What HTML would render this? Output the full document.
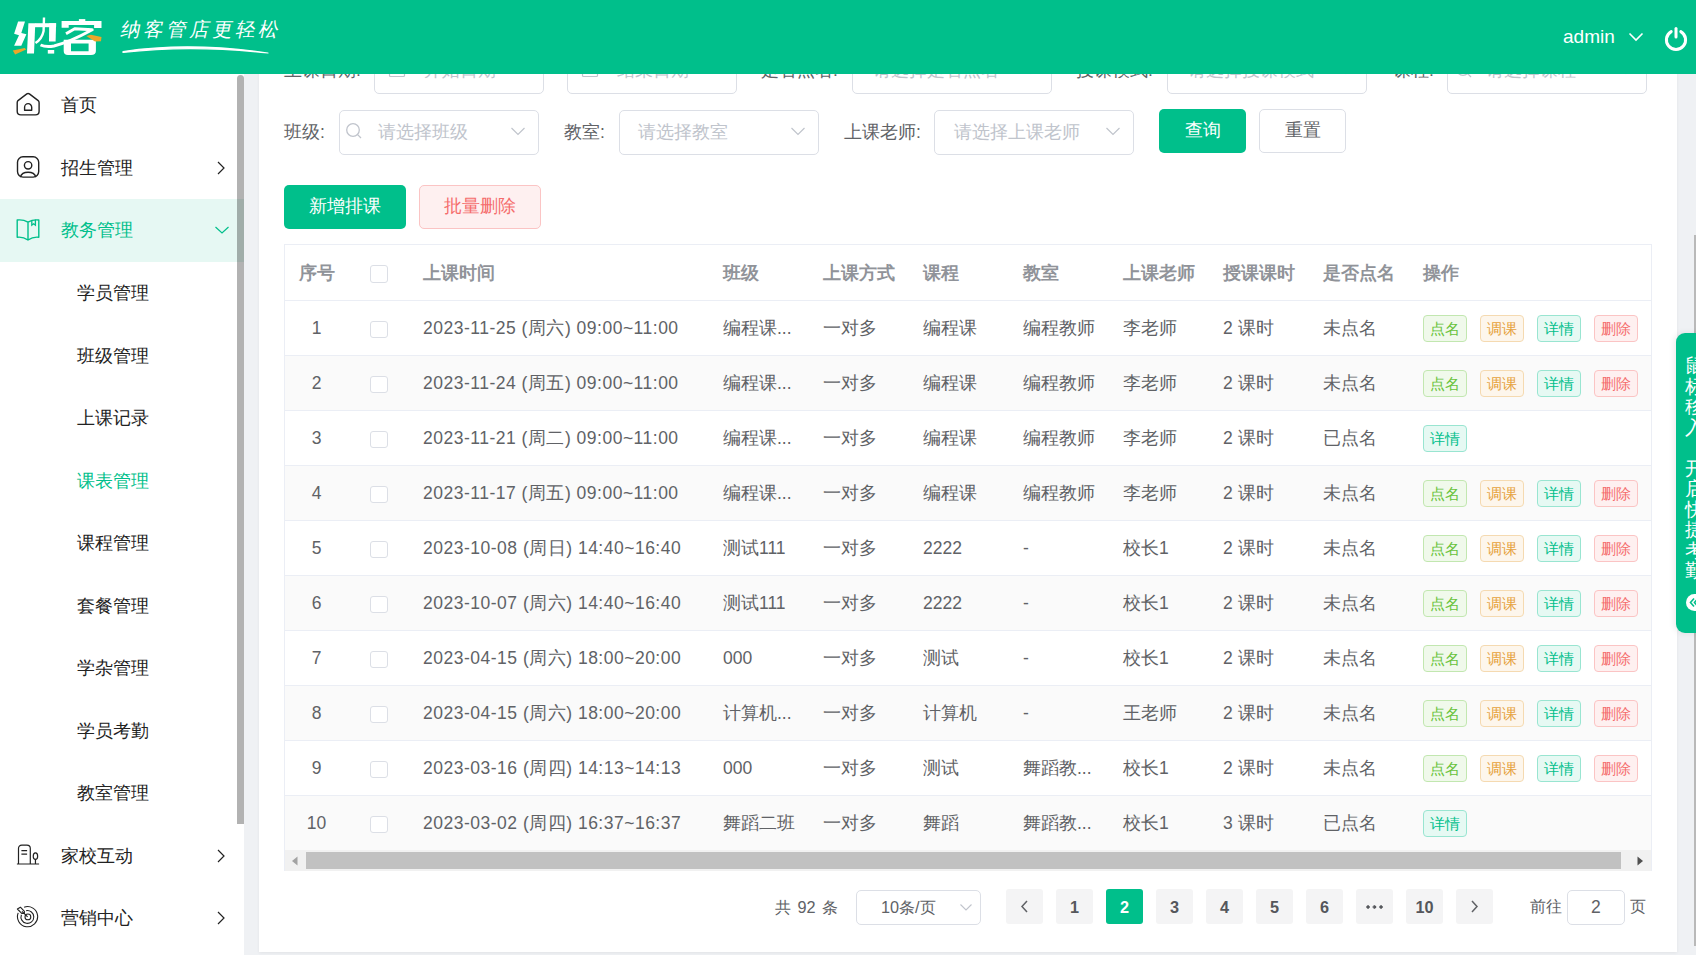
<!DOCTYPE html>
<html><head><meta charset="utf-8">
<style>
*{box-sizing:border-box;margin:0;padding:0}
html,body{width:1696px;height:955px;overflow:hidden}
body{position:relative;background:#eff1f4;font-family:"Liberation Sans",sans-serif;font-size:17.5px;color:#606266}
.abs{position:absolute}
svg{display:block}
#hdr{left:0;top:0;width:1696px;height:74px;background:#00bf8b;z-index:10}
#side{left:0;top:74px;width:244px;height:881px;background:#fff}
#card{left:259px;top:0;width:1418px;height:952px;background:#fff;box-shadow:0 1px 3px rgba(0,0,0,0.06)}
.mi{position:absolute;left:0;width:244px;height:62.5px;color:#222;font-size:17.5px}
.mi .t{position:absolute;left:61px;top:50%;transform:translateY(-50%);line-height:20px;white-space:nowrap}
.mi.sub .t{left:77px}
.mi .ic{position:absolute;left:16px;top:50%;transform:translateY(-50%)}
.mi .ar{position:absolute;left:214px;top:50%;transform:translateY(-50%)}
.lbl{position:absolute;line-height:20px;color:#606266;white-space:nowrap}
.inp{position:absolute;height:44.5px;border:1px solid #dcdfe6;border-radius:5px;background:#fff}
.ph{position:absolute;top:50%;transform:translateY(-50%);line-height:20px;color:#c0c4cc;white-space:nowrap}
.btn{position:absolute;border-radius:5px;text-align:center;white-space:nowrap}
.cell{position:absolute;white-space:nowrap;color:#606266;line-height:20px}
.th{font-weight:bold;color:#909399}
.dt{letter-spacing:0.5px}
.cb{position:absolute;width:17.5px;height:17.5px;border:1px solid #dcdfe6;border-radius:3px;background:#fff}
.tag{position:absolute;width:44px;height:27px;line-height:25px;border:1px solid;border-radius:4px;font-size:15px;text-align:center}
.tg-g{color:#67c23a;background:#f0f9eb;border-color:#c2e7b0}
.tg-o{color:#e6a23c;background:#fdf6ec;border-color:#f5dab1}
.tg-p{color:#00bf8b;background:#e6f9f3;border-color:#99e5d1}
.tg-r{color:#f56c6c;background:#fef0f0;border-color:#fbc4c4}
.pg{position:absolute;top:889px;width:37px;height:35px;line-height:37px;background:#f4f4f5;border-radius:3px;text-align:center;font-weight:bold;color:#55575c;font-size:16.25px}
.pg.act{background:#00bf8b;color:#fff}
</style></head><body>
<div id="hdr" class="abs">
 <svg class="abs" style="left:0;top:0" width="110" height="74" viewBox="0 0 110 74">
<g fill="#fff">
<path d="M18.1 21.6 L25 21.6 L21.3 32.9 L26.4 34.3 L21.3 45.8 L14.1 45.8 L19 35.2 L14.1 33.8 Z"/>
<path d="M28.4 23.2 L35.3 23.2 L34 53.6 L27 53.6 Z"/>
<path d="M35 23.2 L56.1 23.2 L56.1 27.2 L35 27.2 Z"/>
<path d="M49.2 23.2 L56.1 23.2 L55.6 41.5 L49 41.5 Z"/>
<rect x="47.8" y="50" width="6.4" height="3.6"/>
<rect x="78.9" y="19.1" width="6.4" height="3"/>
<path d="M61.6 21.1 H101.5 V28 H94.1 V25.1 H68.7 V27.8 H61.6 Z"/>
<path d="M63.7 39.8 H95.9 V51 Q95.9 55 91 55 H68 Q63.7 55 63.7 51 Z M71 43.5 V51.3 H88.6 V43.5 Z" fill-rule="evenodd"/>
</g>
<path d="M44 17.5 L43.6 31 Q42 39 35.5 43" stroke="#fff" stroke-width="2.4" fill="none"/>
<path d="M66 33.8 L74.7 28.8 L92.2 29.8 Q70 42 54 46 Q46 47.5 40.5 45" stroke="#fff" stroke-width="3" fill="none" stroke-linejoin="round"/>
<path d="M12.8 50.4 L24.7 48.1 L26.1 49.5 L15.1 54.6 Z" fill="#eba62a"/>
<path d="M86.3 36.1 L90.9 34.7 L101.5 37 L101 41.2 L95 41.6 Z" fill="#eba62a"/>
</svg>
<div class="abs" style="left:121px;top:15px;font-size:19.5px;color:#fff;line-height:30px;letter-spacing:3px;transform:skewX(-12deg);font-family:'Liberation Serif',serif">纳客管店更轻松</div>
 <svg class="abs" style="left:120px;top:40px" width="160" height="16" viewBox="0 0 160 16"><path d="M3 11.5 Q 70 1.5 148 13 Q 70 4.5 3 12.5 Z" stroke="#fff" stroke-width="1.2" fill="#fff" stroke-linejoin="round"/></svg>
 <div class="abs" style="left:1563px;top:25px;font-size:19px;color:#fff;line-height:24px">admin</div>
 <svg class="abs" style="left:1628px;top:32px" width="16" height="10" viewBox="0 0 16 10"><path d="M1.5 1.5 L8 8 L14.5 1.5" stroke="#fff" stroke-width="1.6" fill="none"/></svg>
 <svg class="abs" style="left:1663px;top:26px" width="26" height="26" viewBox="0 0 26 26"><path d="M8.2 5.6 A 9.6 9.6 0 1 0 17.8 5.6" stroke="#fff" stroke-width="3" fill="none" stroke-linecap="round"/><path d="M13 2.5 V 11" stroke="#fff" stroke-width="3" stroke-linecap="round"/></svg>
</div>
<div id="side" class="abs">
<div class="mi" style="top:-0.25px"><div class="ic"><svg width="26" height="26" viewBox="0 0 26 26"><path d="M2 8.6 L10.8 1.9 Q12.1 1 13.4 1.9 L22.2 8.6 Q23.1 9.4 23.1 10.8 V19.2 Q23.1 22.9 19.4 22.9 H4.9 Q1.2 22.9 1.2 19.2 V10.8 Q1.2 9.4 2 8.6 Z" stroke="#222" stroke-width="1.4" fill="none"/><path d="M8.6 18.3 V15.2 A3.55 3.55 0 0 1 15.7 15.2 V18.3 Z" stroke="#222" stroke-width="1.4" fill="none" stroke-linejoin="round"/></svg></div><div class="t">首页</div></div>
<div class="mi" style="top:62.75px"><div class="ic"><svg width="26" height="26" viewBox="0 0 26 26"><rect x="1.5" y="1.8" width="21.2" height="20.3" rx="5.5" stroke="#222" stroke-width="1.4" fill="none"/><circle cx="12.1" cy="10.3" r="3.7" stroke="#222" stroke-width="1.4" fill="none"/><path d="M4.3 22.1 A 8 6.2 0 0 1 19.9 22.1" stroke="#222" stroke-width="1.4" fill="none"/></svg></div><div class="t">招生管理</div><div class="ar"><svg width="14" height="16" viewBox="0 0 14 16"><path d="M4 2 L10 8 L4 14" stroke="#222" stroke-width="1.2" fill="none"/></svg></div></div>
<div class="mi" style="top:125px;background:#e6f8f3;color:#00bf8b"><div class="ic"><svg width="26" height="26" viewBox="0 0 26 26"><path d="M12 5.2 Q 7 2.2 1.2 3 V20.2 Q 7 19.5 12 23 Q 17 19.5 22.8 20.2 V3 Q 17 2.2 12 5.2 Z M12 5.2 V23" stroke="#00bf8b" stroke-width="1.4" fill="none" stroke-linejoin="round"/><path d="M15.8 3.2 V8.2 L17.6 6.8 L19.4 8.2 V2.6" stroke="#00bf8b" stroke-width="1.3" fill="none"/></svg></div><div class="t">教务管理</div><div class="ar"><svg width="16" height="14" viewBox="0 0 16 14"><path d="M1.5 4 L8 10 L14.5 4" stroke="#00bf8b" stroke-width="1.2" fill="none"/></svg></div></div>
<div class="mi sub" style="top:187.75px"><div class="t">学员管理</div></div>
<div class="mi sub" style="top:250.25px"><div class="t">班级管理</div></div>
<div class="mi sub" style="top:312.75px"><div class="t">上课记录</div></div>
<div class="mi sub" style="top:375.25px;color:#00bf8b"><div class="t">课表管理</div></div>
<div class="mi sub" style="top:437.75px"><div class="t">课程管理</div></div>
<div class="mi sub" style="top:500.25px"><div class="t">套餐管理</div></div>
<div class="mi sub" style="top:562.75px"><div class="t">学杂管理</div></div>
<div class="mi sub" style="top:625.25px"><div class="t">学员考勤</div></div>
<div class="mi sub" style="top:687.75px"><div class="t">教室管理</div></div>
<div class="mi" style="top:750.25px"><div class="ic"><svg width="26" height="26" viewBox="0 0 26 26"><path d="M2.5 21 V5.6 Q2.5 2.2 5.9 2.2 H10.9 Q14.3 2.2 14.3 5.6 V21" stroke="#222" stroke-width="1.2" fill="none"/><path d="M5.4 7.7 H11.1 M5.4 11.1 H11.1" stroke="#222" stroke-width="1.2"/><ellipse cx="19.45" cy="13.15" rx="2.2" ry="3.2" stroke="#222" stroke-width="1.2" fill="none"/><path d="M19.45 16.4 V21 M0.9 21 H23.1" stroke="#222" stroke-width="1.2"/></svg></div><div class="t">家校互动</div><div class="ar"><svg width="14" height="16" viewBox="0 0 14 16"><path d="M4 2 L10 8 L4 14" stroke="#222" stroke-width="1.2" fill="none"/></svg></div></div>
<div class="mi" style="top:812.75px"><div class="ic"><svg width="26" height="26" viewBox="0 0 26 26"><path d="M2.2 7.9 A10.1 10.1 0 1 0 8.1 2.2" stroke="#222" stroke-width="1.1" fill="none"/><path d="M5.4 9.7 A6.4 6.4 0 1 0 10.1 5.7" stroke="#222" stroke-width="1.1" fill="none"/><circle cx="11.9" cy="11.9" r="2.9" stroke="#222" stroke-width="1.1" fill="none"/><path d="M6 6.3 L11.6 11.8" stroke="#222" stroke-width="1.1"/><path d="M1.4 4 L4.4 2.2 L8.4 6.4 L8.4 8.4 L5.7 8.4 Z" stroke="#222" stroke-width="1.1" fill="none" stroke-linejoin="round"/></svg></div><div class="t">营销中心</div><div class="ar"><svg width="14" height="16" viewBox="0 0 14 16"><path d="M4 2 L10 8 L4 14" stroke="#222" stroke-width="1.2" fill="none"/></svg></div></div>
<div class="abs" style="left:237px;top:1px;width:7px;height:749px;background:rgba(0,0,0,0.3);border-radius:3.5px 3.5px 0 0"></div>
</div>
<div id="card" class="abs"></div>
<div class="lbl" style="left:284px;top:60px">上课日期:</div>
<div class="inp" style="left:374px;top:49px;width:170px"><div class="abs" style="left:13px;top:11px"><svg width="18" height="18" viewBox="0 0 18 18"><rect x="1.5" y="2.5" width="15" height="13" rx="1" stroke="#c0c4cc" stroke-width="1.2" fill="none"/><path d="M1.5 6.5 H16.5 M5 1 V4 M13 1 V4" stroke="#c0c4cc" stroke-width="1.2"/></svg></div><div class="ph" style="left:49px;margin-top:-1.5px">开始日期</div></div>
<div class="inp" style="left:567px;top:49px;width:170px"><div class="abs" style="left:13px;top:11px"><svg width="18" height="18" viewBox="0 0 18 18"><rect x="1.5" y="2.5" width="15" height="13" rx="1" stroke="#c0c4cc" stroke-width="1.2" fill="none"/><path d="M1.5 6.5 H16.5 M5 1 V4 M13 1 V4" stroke="#c0c4cc" stroke-width="1.2"/></svg></div><div class="ph" style="left:49px;margin-top:-1.5px">结束日期</div></div>
<div class="lbl" style="left:761px;top:60px">是否点名:</div>
<div class="inp" style="left:852px;top:49px;width:200px"><div class="ph" style="left:20px;margin-top:-1.5px">请选择是否点名</div><div class="abs" style="left:170px;top:15px"><svg width="16" height="10" viewBox="0 0 16 10"><path d="M1.5 2 L8 8.5 L14.5 2" stroke="#c0c4cc" stroke-width="1.2" fill="none"/></svg></div></div>
<div class="lbl" style="left:1076px;top:60px">授课模式:</div>
<div class="inp" style="left:1167px;top:49px;width:200px"><div class="ph" style="left:20px;margin-top:-1.5px">请选择授课模式</div><div class="abs" style="left:170px;top:15px"><svg width="16" height="10" viewBox="0 0 16 10"><path d="M1.5 2 L8 8.5 L14.5 2" stroke="#c0c4cc" stroke-width="1.2" fill="none"/></svg></div></div>
<div class="lbl" style="left:1393px;top:60px">课程:</div>
<div class="inp" style="left:1447px;top:49px;width:200px"><div class="abs" style="left:7px;top:11px"><svg width="18" height="18" viewBox="0 0 18 18"><circle cx="8" cy="8" r="6.3" stroke="#c0c4cc" stroke-width="1.3" fill="none"/><path d="M12.6 12.6 L16 16" stroke="#c0c4cc" stroke-width="1.3"/></svg></div><div class="ph" style="left:38px;margin-top:-1.5px">请选择课程</div><div class="abs" style="left:170px;top:15px"><svg width="16" height="10" viewBox="0 0 16 10"><path d="M1.5 2 L8 8.5 L14.5 2" stroke="#c0c4cc" stroke-width="1.2" fill="none"/></svg></div></div>
<div class="lbl" style="left:284px;top:122px">班级:</div>
<div class="inp" style="left:339px;top:110.2px;width:200px"><div class="abs" style="left:5px;top:11px"><svg width="18" height="18" viewBox="0 0 18 18"><circle cx="8" cy="8" r="6.3" stroke="#c0c4cc" stroke-width="1.3" fill="none"/><path d="M12.6 12.6 L16 16" stroke="#c0c4cc" stroke-width="1.3"/></svg></div><div class="ph" style="left:38px;margin-top:0px">请选择班级</div><div class="abs" style="left:170px;top:15px"><svg width="16" height="10" viewBox="0 0 16 10"><path d="M1.5 2 L8 8.5 L14.5 2" stroke="#c0c4cc" stroke-width="1.2" fill="none"/></svg></div></div>
<div class="lbl" style="left:564px;top:122px">教室:</div>
<div class="inp" style="left:619px;top:110.2px;width:200px"><div class="ph" style="left:18px;margin-top:0px">请选择教室</div><div class="abs" style="left:170px;top:15px"><svg width="16" height="10" viewBox="0 0 16 10"><path d="M1.5 2 L8 8.5 L14.5 2" stroke="#c0c4cc" stroke-width="1.2" fill="none"/></svg></div></div>
<div class="lbl" style="left:844px;top:122px">上课老师:</div>
<div class="inp" style="left:934px;top:110.2px;width:200px"><div class="ph" style="left:19px;margin-top:0px">请选择上课老师</div><div class="abs" style="left:170px;top:15px"><svg width="16" height="10" viewBox="0 0 16 10"><path d="M1.5 2 L8 8.5 L14.5 2" stroke="#c0c4cc" stroke-width="1.2" fill="none"/></svg></div></div>
<div class="btn" style="left:1159px;top:109px;width:87px;height:44px;line-height:42px;background:#00bf8b;color:#fff">查询</div>
<div class="btn" style="left:1259px;top:109px;width:87px;height:44px;line-height:40px;background:#fff;border:1px solid #dcdfe6;color:#606266">重置</div>
<div class="btn" style="left:284px;top:185px;width:122px;height:44px;line-height:42px;background:#00bf8b;color:#fff">新增排课</div>
<div class="btn" style="left:419px;top:185px;width:122px;height:44px;line-height:40px;background:#fef0f0;border:1px solid #fbc4c4;color:#f56c6c">批量删除</div>
<div class="abs" id="tbl" style="left:284px;top:244px;width:1368px;height:627px;border:1px solid #ebeef5;border-bottom:none;overflow:hidden;background:#fff">
<div class="abs" style="left:0;top:55px;width:1368px;height:1px;background:#ebeef5"></div>
<div class="cell th" style="left:14px;top:17.5px">序号</div>
<div class="cell th" style="left:138px;top:17.5px">上课时间</div>
<div class="cell th" style="left:438px;top:17.5px">班级</div>
<div class="cell th" style="left:538px;top:17.5px">上课方式</div>
<div class="cell th" style="left:638px;top:17.5px">课程</div>
<div class="cell th" style="left:738px;top:17.5px">教室</div>
<div class="cell th" style="left:838px;top:17.5px">上课老师</div>
<div class="cell th" style="left:938px;top:17.5px">授课课时</div>
<div class="cell th" style="left:1038px;top:17.5px">是否点名</div>
<div class="cell th" style="left:1138px;top:17.5px">操作</div>
<div class="cb" style="left:85px;top:20px"></div>
<div class="abs" style="left:0;top:56px;width:1368px;height:54px;background:#fff"></div>
<div class="abs" style="left:0;top:110px;width:1368px;height:1px;background:#ebeef5"></div>
<div class="cell" style="left:-1px;width:65px;text-align:center;top:73px">1</div>
<div class="cb" style="left:85px;top:75.5px"></div>
<div class="cell dt" style="left:138px;top:73px">2023-11-25 (周六) 09:00~11:00</div>
<div class="cell " style="left:438px;top:73px">编程课...</div>
<div class="cell " style="left:538px;top:73px">一对多</div>
<div class="cell " style="left:638px;top:73px">编程课</div>
<div class="cell " style="left:738px;top:73px">编程教师</div>
<div class="cell " style="left:838px;top:73px">李老师</div>
<div class="cell " style="left:938px;top:73px">2 课时</div>
<div class="cell " style="left:1038px;top:73px">未点名</div>
<div class="tag tg-g" style="left:1138px;top:70px">点名</div>
<div class="tag tg-o" style="left:1195px;top:70px">调课</div>
<div class="tag tg-p" style="left:1252px;top:70px">详情</div>
<div class="tag tg-r" style="left:1309px;top:70px">删除</div>
<div class="abs" style="left:0;top:111px;width:1368px;height:54px;background:#fafafa"></div>
<div class="abs" style="left:0;top:165px;width:1368px;height:1px;background:#ebeef5"></div>
<div class="cell" style="left:-1px;width:65px;text-align:center;top:128px">2</div>
<div class="cb" style="left:85px;top:130.5px"></div>
<div class="cell dt" style="left:138px;top:128px">2023-11-24 (周五) 09:00~11:00</div>
<div class="cell " style="left:438px;top:128px">编程课...</div>
<div class="cell " style="left:538px;top:128px">一对多</div>
<div class="cell " style="left:638px;top:128px">编程课</div>
<div class="cell " style="left:738px;top:128px">编程教师</div>
<div class="cell " style="left:838px;top:128px">李老师</div>
<div class="cell " style="left:938px;top:128px">2 课时</div>
<div class="cell " style="left:1038px;top:128px">未点名</div>
<div class="tag tg-g" style="left:1138px;top:125px">点名</div>
<div class="tag tg-o" style="left:1195px;top:125px">调课</div>
<div class="tag tg-p" style="left:1252px;top:125px">详情</div>
<div class="tag tg-r" style="left:1309px;top:125px">删除</div>
<div class="abs" style="left:0;top:166px;width:1368px;height:54px;background:#fff"></div>
<div class="abs" style="left:0;top:220px;width:1368px;height:1px;background:#ebeef5"></div>
<div class="cell" style="left:-1px;width:65px;text-align:center;top:183px">3</div>
<div class="cb" style="left:85px;top:185.5px"></div>
<div class="cell dt" style="left:138px;top:183px">2023-11-21 (周二) 09:00~11:00</div>
<div class="cell " style="left:438px;top:183px">编程课...</div>
<div class="cell " style="left:538px;top:183px">一对多</div>
<div class="cell " style="left:638px;top:183px">编程课</div>
<div class="cell " style="left:738px;top:183px">编程教师</div>
<div class="cell " style="left:838px;top:183px">李老师</div>
<div class="cell " style="left:938px;top:183px">2 课时</div>
<div class="cell " style="left:1038px;top:183px">已点名</div>
<div class="tag tg-p" style="left:1138px;top:180px">详情</div>
<div class="abs" style="left:0;top:221px;width:1368px;height:54px;background:#fafafa"></div>
<div class="abs" style="left:0;top:275px;width:1368px;height:1px;background:#ebeef5"></div>
<div class="cell" style="left:-1px;width:65px;text-align:center;top:238px">4</div>
<div class="cb" style="left:85px;top:240.5px"></div>
<div class="cell dt" style="left:138px;top:238px">2023-11-17 (周五) 09:00~11:00</div>
<div class="cell " style="left:438px;top:238px">编程课...</div>
<div class="cell " style="left:538px;top:238px">一对多</div>
<div class="cell " style="left:638px;top:238px">编程课</div>
<div class="cell " style="left:738px;top:238px">编程教师</div>
<div class="cell " style="left:838px;top:238px">李老师</div>
<div class="cell " style="left:938px;top:238px">2 课时</div>
<div class="cell " style="left:1038px;top:238px">未点名</div>
<div class="tag tg-g" style="left:1138px;top:235px">点名</div>
<div class="tag tg-o" style="left:1195px;top:235px">调课</div>
<div class="tag tg-p" style="left:1252px;top:235px">详情</div>
<div class="tag tg-r" style="left:1309px;top:235px">删除</div>
<div class="abs" style="left:0;top:276px;width:1368px;height:54px;background:#fff"></div>
<div class="abs" style="left:0;top:330px;width:1368px;height:1px;background:#ebeef5"></div>
<div class="cell" style="left:-1px;width:65px;text-align:center;top:293px">5</div>
<div class="cb" style="left:85px;top:295.5px"></div>
<div class="cell dt" style="left:138px;top:293px">2023-10-08 (周日) 14:40~16:40</div>
<div class="cell " style="left:438px;top:293px">测试111</div>
<div class="cell " style="left:538px;top:293px">一对多</div>
<div class="cell " style="left:638px;top:293px">2222</div>
<div class="cell " style="left:738px;top:293px">-</div>
<div class="cell " style="left:838px;top:293px">校长1</div>
<div class="cell " style="left:938px;top:293px">2 课时</div>
<div class="cell " style="left:1038px;top:293px">未点名</div>
<div class="tag tg-g" style="left:1138px;top:290px">点名</div>
<div class="tag tg-o" style="left:1195px;top:290px">调课</div>
<div class="tag tg-p" style="left:1252px;top:290px">详情</div>
<div class="tag tg-r" style="left:1309px;top:290px">删除</div>
<div class="abs" style="left:0;top:331px;width:1368px;height:54px;background:#fafafa"></div>
<div class="abs" style="left:0;top:385px;width:1368px;height:1px;background:#ebeef5"></div>
<div class="cell" style="left:-1px;width:65px;text-align:center;top:348px">6</div>
<div class="cb" style="left:85px;top:350.5px"></div>
<div class="cell dt" style="left:138px;top:348px">2023-10-07 (周六) 14:40~16:40</div>
<div class="cell " style="left:438px;top:348px">测试111</div>
<div class="cell " style="left:538px;top:348px">一对多</div>
<div class="cell " style="left:638px;top:348px">2222</div>
<div class="cell " style="left:738px;top:348px">-</div>
<div class="cell " style="left:838px;top:348px">校长1</div>
<div class="cell " style="left:938px;top:348px">2 课时</div>
<div class="cell " style="left:1038px;top:348px">未点名</div>
<div class="tag tg-g" style="left:1138px;top:345px">点名</div>
<div class="tag tg-o" style="left:1195px;top:345px">调课</div>
<div class="tag tg-p" style="left:1252px;top:345px">详情</div>
<div class="tag tg-r" style="left:1309px;top:345px">删除</div>
<div class="abs" style="left:0;top:386px;width:1368px;height:54px;background:#fff"></div>
<div class="abs" style="left:0;top:440px;width:1368px;height:1px;background:#ebeef5"></div>
<div class="cell" style="left:-1px;width:65px;text-align:center;top:403px">7</div>
<div class="cb" style="left:85px;top:405.5px"></div>
<div class="cell dt" style="left:138px;top:403px">2023-04-15 (周六) 18:00~20:00</div>
<div class="cell " style="left:438px;top:403px">000</div>
<div class="cell " style="left:538px;top:403px">一对多</div>
<div class="cell " style="left:638px;top:403px">测试</div>
<div class="cell " style="left:738px;top:403px">-</div>
<div class="cell " style="left:838px;top:403px">校长1</div>
<div class="cell " style="left:938px;top:403px">2 课时</div>
<div class="cell " style="left:1038px;top:403px">未点名</div>
<div class="tag tg-g" style="left:1138px;top:400px">点名</div>
<div class="tag tg-o" style="left:1195px;top:400px">调课</div>
<div class="tag tg-p" style="left:1252px;top:400px">详情</div>
<div class="tag tg-r" style="left:1309px;top:400px">删除</div>
<div class="abs" style="left:0;top:441px;width:1368px;height:54px;background:#fafafa"></div>
<div class="abs" style="left:0;top:495px;width:1368px;height:1px;background:#ebeef5"></div>
<div class="cell" style="left:-1px;width:65px;text-align:center;top:458px">8</div>
<div class="cb" style="left:85px;top:460.5px"></div>
<div class="cell dt" style="left:138px;top:458px">2023-04-15 (周六) 18:00~20:00</div>
<div class="cell " style="left:438px;top:458px">计算机...</div>
<div class="cell " style="left:538px;top:458px">一对多</div>
<div class="cell " style="left:638px;top:458px">计算机</div>
<div class="cell " style="left:738px;top:458px">-</div>
<div class="cell " style="left:838px;top:458px">王老师</div>
<div class="cell " style="left:938px;top:458px">2 课时</div>
<div class="cell " style="left:1038px;top:458px">未点名</div>
<div class="tag tg-g" style="left:1138px;top:455px">点名</div>
<div class="tag tg-o" style="left:1195px;top:455px">调课</div>
<div class="tag tg-p" style="left:1252px;top:455px">详情</div>
<div class="tag tg-r" style="left:1309px;top:455px">删除</div>
<div class="abs" style="left:0;top:496px;width:1368px;height:54px;background:#fff"></div>
<div class="abs" style="left:0;top:550px;width:1368px;height:1px;background:#ebeef5"></div>
<div class="cell" style="left:-1px;width:65px;text-align:center;top:513px">9</div>
<div class="cb" style="left:85px;top:515.5px"></div>
<div class="cell dt" style="left:138px;top:513px">2023-03-16 (周四) 14:13~14:13</div>
<div class="cell " style="left:438px;top:513px">000</div>
<div class="cell " style="left:538px;top:513px">一对多</div>
<div class="cell " style="left:638px;top:513px">测试</div>
<div class="cell " style="left:738px;top:513px">舞蹈教...</div>
<div class="cell " style="left:838px;top:513px">校长1</div>
<div class="cell " style="left:938px;top:513px">2 课时</div>
<div class="cell " style="left:1038px;top:513px">未点名</div>
<div class="tag tg-g" style="left:1138px;top:510px">点名</div>
<div class="tag tg-o" style="left:1195px;top:510px">调课</div>
<div class="tag tg-p" style="left:1252px;top:510px">详情</div>
<div class="tag tg-r" style="left:1309px;top:510px">删除</div>
<div class="abs" style="left:0;top:551px;width:1368px;height:54px;background:#fafafa"></div>
<div class="abs" style="left:0;top:605px;width:1368px;height:1px;background:#ebeef5"></div>
<div class="cell" style="left:-1px;width:65px;text-align:center;top:568px">10</div>
<div class="cb" style="left:85px;top:570.5px"></div>
<div class="cell dt" style="left:138px;top:568px">2023-03-02 (周四) 16:37~16:37</div>
<div class="cell " style="left:438px;top:568px">舞蹈二班</div>
<div class="cell " style="left:538px;top:568px">一对多</div>
<div class="cell " style="left:638px;top:568px">舞蹈</div>
<div class="cell " style="left:738px;top:568px">舞蹈教...</div>
<div class="cell " style="left:838px;top:568px">校长1</div>
<div class="cell " style="left:938px;top:568px">3 课时</div>
<div class="cell " style="left:1038px;top:568px">已点名</div>
<div class="tag tg-p" style="left:1138px;top:565px">详情</div>
<div class="abs" style="left:0;top:605px;width:1368px;height:21px;background:#f1f1f1"></div>
<div class="abs" style="left:21px;top:607px;width:1315px;height:17px;background:#c1c1c1"></div>
<svg class="abs" style="left:6px;top:610px" width="8" height="12" viewBox="0 0 8 12"><path d="M6.5 1.5 V10.5 L1 6 Z" fill="#a3a3a3"/></svg>
<svg class="abs" style="left:1351px;top:610px" width="8" height="12" viewBox="0 0 8 12"><path d="M1.5 1.5 V10.5 L7 6 Z" fill="#505050"/></svg>
</div>
<div class="lbl" style="left:775px;top:896.5px;font-size:16.25px;word-spacing:2px">共 92 条</div>
<div class="inp" style="left:856px;top:890px;width:125px;height:34.5px"><div class="abs" style="left:24px;top:5.5px;line-height:20px;font-size:16.25px;color:#606266">10条/页</div><svg class="abs" style="left:101.5px;top:11.5px" width="14" height="9" viewBox="0 0 14 9"><path d="M1.5 1.5 L7 7 L12.5 1.5" stroke="#c0c4cc" stroke-width="1.1" fill="none"/></svg></div>
<div class="pg" style="left:1006px"><svg class="abs" style="left:13px;top:9px" width="11" height="17" viewBox="0 0 11 17"><path d="M8 3 L3 8.5 L8 14" stroke="#606266" stroke-width="1.5" fill="none"/></svg></div>
<div class="pg" style="left:1056px">1</div>
<div class="pg act" style="left:1106px">2</div>
<div class="pg" style="left:1156px">3</div>
<div class="pg" style="left:1206px">4</div>
<div class="pg" style="left:1256px">5</div>
<div class="pg" style="left:1306px">6</div>
<div class="pg" style="left:1356px"><div class="abs" style="left:10px;top:16px;width:17px;height:4px;background:radial-gradient(circle at 2px 2px,#55575c 1.5px,transparent 1.8px) 0 0/6.5px 4px repeat-x"></div></div>
<div class="pg" style="left:1406px">10</div>
<div class="pg" style="left:1456px"><svg class="abs" style="left:13px;top:9px" width="11" height="17" viewBox="0 0 11 17"><path d="M3 3 L8 8.5 L3 14" stroke="#606266" stroke-width="1.5" fill="none"/></svg></div>
<div class="lbl" style="left:1530px;top:895.5px;font-size:16.25px">前往</div>
<div class="inp" style="left:1567px;top:890px;width:57.5px;height:34.5px;text-align:center;line-height:33px;font-size:17.5px;color:#606266">2</div>
<div class="lbl" style="left:1629.5px;top:895.5px;font-size:16.25px">页</div>
<div class="abs" style="left:1676px;top:333px;width:40px;height:299.5px;background:#00bf8b;border-radius:9px 0 0 9px;box-shadow:-2px 0 6px rgba(0,0,0,0.08);z-index:7">
<div class="abs" style="left:9px;top:23px;width:22px;font-size:19px;line-height:20.5px;color:#fff;white-space:normal;word-break:break-all">鼠标移入<br><br>开启快捷考勤</div>
<div class="abs" style="left:10px;top:261px;width:17px;height:17px;border-radius:50%;background:#fff"><svg class="abs" style="left:3px;top:3px" width="11" height="11" viewBox="0 0 11 11"><path d="M5 1.5 L1.5 5.5 L5 9.5 M9 1.5 L5.5 5.5 L9 9.5" stroke="#00bf8b" stroke-width="1.6" fill="none"/></svg></div>
</div>
<div class="abs" style="left:1694px;top:235px;width:2px;height:710.5px;background:#b9b9b9;z-index:6"></div>
</body></html>
